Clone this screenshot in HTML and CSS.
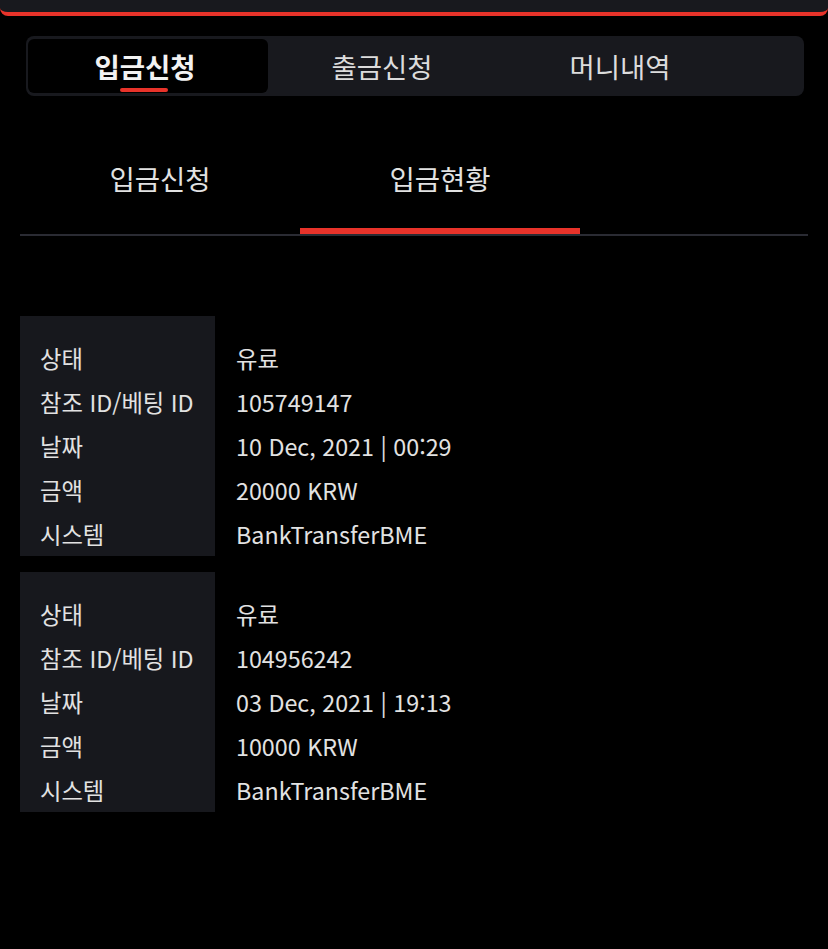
FILE: index.html
```html
<!DOCTYPE html>
<html lang="ko">
<head>
<meta charset="UTF-8" />
<meta name="viewport" content="width=device-width, initial-scale=1" />
<title>입금현황</title>
<link rel="stylesheet" href="styles.css">
</head>
<body>

<!-- TOP BAR -->
<div class="top-bar"></div>

<!-- MAIN TABS -->
<div class="main-tabs">
  <div class="main-tab active">입금신청</div>
  <div class="main-tab">출금신청</div>
  <div class="main-tab">머니내역</div>
</div>

<!-- SUB TABS -->
<div class="sub-tabs">
  <div class="sub-tab">입금신청</div>
  <div class="sub-tab active">입금현황</div>
</div>

<!-- HISTORY -->
<div class="history">
  <div class="history-card">
    <div class="history-labels">
      <div class="row">상태</div>
      <div class="row">참조 ID/베팅 ID</div>
      <div class="row">날짜</div>
      <div class="row">금액</div>
      <div class="row">시스템</div>
    </div>
    <div class="history-values">
      <div class="row">유료</div>
      <div class="row">105749147</div>
      <div class="row">10 Dec, 2021 | 00:29</div>
      <div class="row">20000 KRW</div>
      <div class="row">BankTransferBME</div>
    </div>
  </div>
  <div class="history-card">
    <div class="history-labels">
      <div class="row">상태</div>
      <div class="row">참조 ID/베팅 ID</div>
      <div class="row">날짜</div>
      <div class="row">금액</div>
      <div class="row">시스템</div>
    </div>
    <div class="history-values">
      <div class="row">유료</div>
      <div class="row">104956242</div>
      <div class="row">03 Dec, 2021 | 19:13</div>
      <div class="row">10000 KRW</div>
      <div class="row">BankTransferBME</div>
    </div>
  </div>
</div>

</body>
</html>
```

FILE: styles.css
```css
body {
  margin: 0;
  font-family: "Noto Sans CJK KR", "Noto Sans", sans-serif;
  background: #000;
  color: #e2e2e2;
  min-height: 100vh;
}
/* TOP BAR */
.top-bar {
  height: 12px;
  background: #18191e;
  border-bottom: 4px solid #e8332a;
  border-radius: 0 0 8px 8px;
}
/* MAIN TABS */
.main-tabs {
  display: flex;
  margin: 20px 24px 0 26px;
  padding: 3px 2px;
  background: #18191e;
  border-radius: 8px;
}
.main-tab {
  position: relative;
  width: 234px;
  height: 54px;
  padding-right: 6px;
  line-height: 54px;
  text-align: center;
  font-size: 27.5px;
  color: #dcdcdc;
  border-radius: 6px;
}
.main-tab + .main-tab {
  width: 228px;
  padding-right: 10px;
}
.main-tab.active {
  background: #000;
  color: #f2f2f2;
  font-weight: 700;
}
.main-tab.active::after {
  content: "";
  position: absolute;
  left: 92px;
  bottom: 1px;
  width: 48px;
  height: 4px;
  border-radius: 2px;
  background: #e8332a;
}
/* SUB TABS */
.sub-tabs {
  display: flex;
  margin: 30px 20px 0 20px;
  border-bottom: 2px solid #2a2b33;
}
.sub-tab {
  width: 280px;
  height: 102px;
  line-height: 104px;
  text-align: center;
  font-size: 27.5px;
  color: #e2e2e2;
  border-bottom: 6px solid transparent;
}
.sub-tab.active {
  border-bottom-color: #e8332a;
}
/* HISTORY */
.history {
  margin: 80px 20px 0 20px;
  display: flex;
  flex-direction: column;
  gap: 16px;
}
.history-card {
  display: flex;
}
.history-labels {
  width: 175px;
  padding: 20px 0 0 20px;
  background: #17181d;
}
.history-values {
  padding: 20px 0 0 21px;
}
.row {
  height: 44px;
  line-height: 44px;
  font-size: 23.3px;
  white-space: nowrap;
}
```
